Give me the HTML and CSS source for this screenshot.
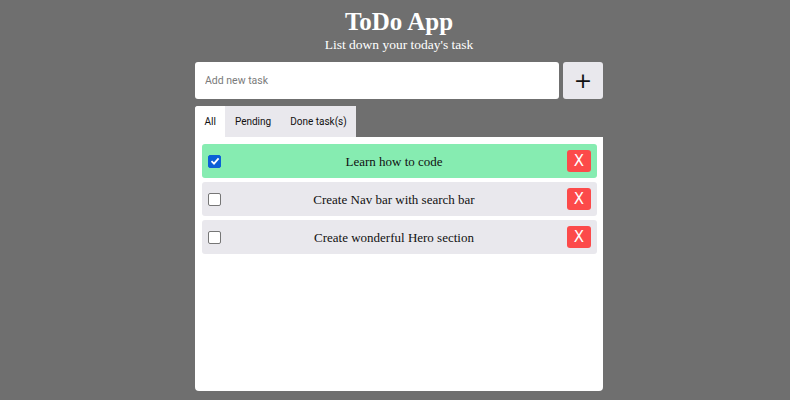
FILE: index.html
```html
<!DOCTYPE html>
<html>
<head>
<meta charset="utf-8">
<link rel="stylesheet" href="styles.css">
</head>
<body>
<div class="app">
  <header class="head">
    <h1 class="title">ToDo App</h1>
    <p class="subtitle">List down your today's task</p>
  </header>
  <div class="add-row">
    <input class="task-input" type="text" placeholder="Add new task">
    <button class="add-btn">+</button>
  </div>
  <div class="tabs">
    <div class="tab active">All</div>
    <div class="tab">Pending</div>
    <div class="tab">Done task(s)</div>
  </div>
  <div class="panel">
    <div class="item done">
      <span class="check checked"><svg width="10" height="10" viewBox="0 0 10 10"><path d="M1.5 5.2 L4 7.6 L8.6 2.4" fill="none" stroke="#fff" stroke-width="1.8"/></svg></span>
      <span class="label">Learn how to code</span>
      <button class="del">X</button>
    </div>
    <div class="item">
      <span class="check"></span>
      <span class="label">Create Nav bar with search bar</span>
      <button class="del">X</button>
    </div>
    <div class="item">
      <span class="check"></span>
      <span class="label">Create wonderful Hero section</span>
      <button class="del">X</button>
    </div>
  </div>
</div>
</body>
</html>
```
FILE: styles.css
```css
html, body {
  margin: 0;
  padding: 0;
  background: #6f6f6f;
}
body {
  padding-left: 8px;
}
.app {
  width: 408px;
  margin: 0 auto;
  display: flex;
  flex-direction: column;
}
.head {
  text-align: center;
  color: #fff;
  font-family: "Liberation Serif", serif;
  padding-top: 7px;
}
.title {
  margin: 0;
  font-size: 25px;
  line-height: 30px;
  font-weight: bold;
}
.subtitle {
  margin: 0;
  font-size: 13.5px;
  line-height: 15px;
}
.add-row {
  display: flex;
  gap: 4px;
  margin-top: 10px;
}
.task-input {
  flex: 1;
  height: 37px;
  box-sizing: border-box;
  border: none;
  border-radius: 3px;
  padding: 0 10px;
  font-family: Roboto, sans-serif;
  font-size: 10.5px;
  outline: none;
}
.task-input::placeholder {
  color: #7a7a7a;
}
.add-btn {
  width: 40px;
  height: 37px;
  border: none;
  border-radius: 3px;
  background: #e9e8ed;
  font-family: "DejaVu Sans", sans-serif;
  font-size: 22px;
  line-height: 1;
  padding: 0;
  color: #111;
}
.tabs {
  display: flex;
  margin-top: 7px;
  align-self: flex-start;
  background: #e9e8ed;
  border-top-left-radius: 3px;
}
.tab {
  height: 31px;
  line-height: 31px;
  padding: 0 9.5px;
  font-family: Roboto, sans-serif;
  font-size: 10px;
  color: #111;
}
.tab.active {
  background: #fff;
  border-top-left-radius: 3px;
}
.panel {
  background: #fff;
  height: 254px;
  border-radius: 0 0 4px 4px;
  padding: 7px 6px 0 7px;
  box-sizing: border-box;
  display: flex;
  flex-direction: column;
  gap: 4px;
}
.item {
  height: 34px;
  display: flex;
  align-items: center;
  background: #e9e8ed;
  border-radius: 3px;
  padding: 0 6px 0 6px;
  font-family: "Liberation Serif", serif;
  font-size: 13px;
  color: #111;
}
.item.done {
  background: #86ecb1;
}
.check {
  width: 11px;
  height: 11px;
  border: 1px solid #767676;
  border-radius: 2px;
  background: #fff;
  display: flex;
  align-items: center;
  justify-content: center;
}
.check.checked {
  background: #0b5fd6;
  border-color: #0b5fd6;
}
.label {
  flex: 1;
  text-align: center;
  padding-top: 1px;
}
.del {
  width: 24px;
  height: 22px;
  border: none;
  border-radius: 3px;
  background: #fc4a4a;
  color: #fff;
  font-family: "DejaVu Sans", sans-serif;
  font-size: 15px;
  padding: 0;
  line-height: 22px;
}
```
